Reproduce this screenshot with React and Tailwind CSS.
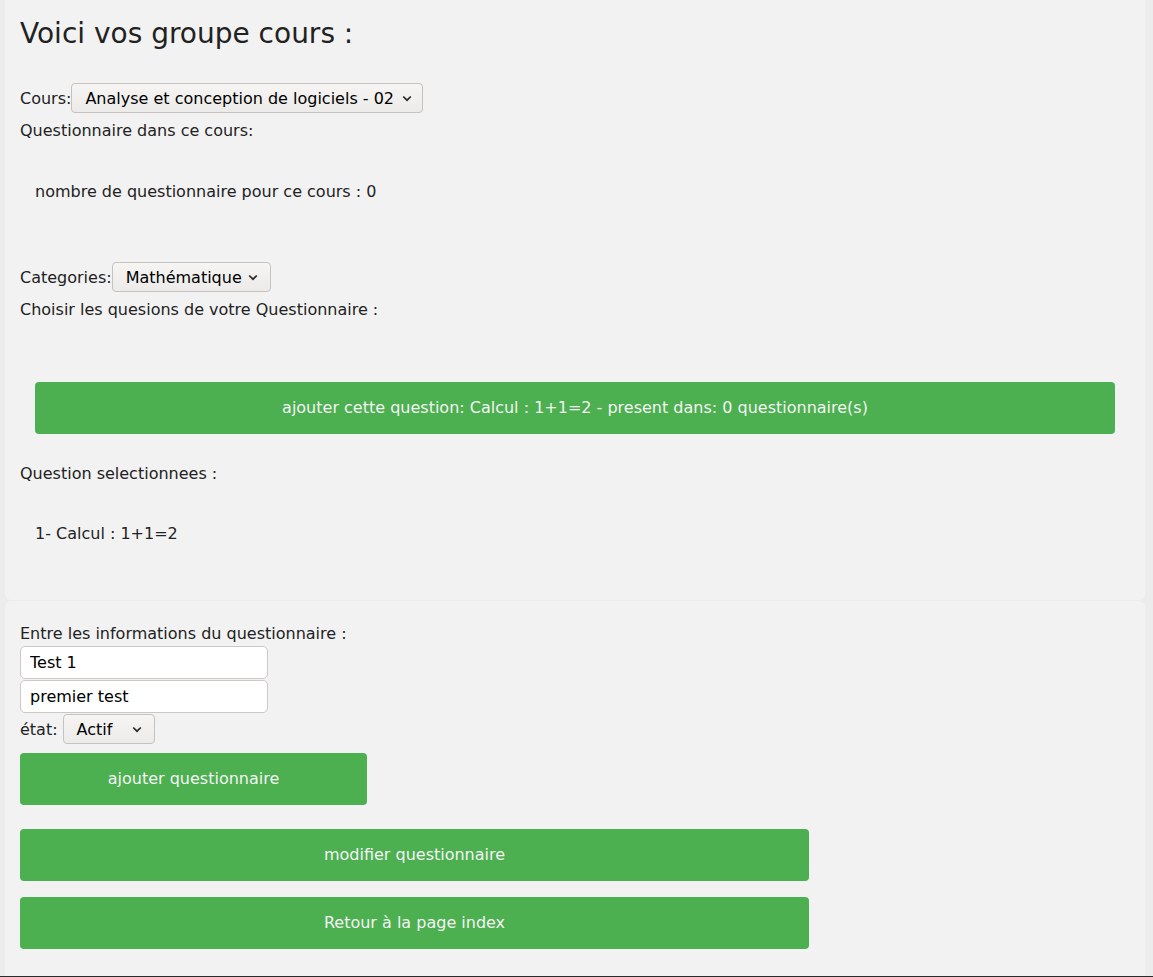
import React from 'react';

const Chevron = () => (
  <svg width="10" height="7" viewBox="0 0 10 7" className="shrink-0">
    <polyline points="1.2,1.5 5,5.2 8.8,1.5" fill="none" stroke="#2a2a2a" strokeWidth="1.7" />
  </svg>
);

function FakeSelect({ value, width, padRight = 'pr-[12px]' }) {
  return (
    <div
      className={`flex h-[30px] items-center justify-between rounded-[4px] border border-[#c5c2bf] bg-gradient-to-b from-[#f6f5f4] to-[#ecebe9] pl-[13px] ${padRight} text-black ${width}`}
    >
      <span>{value}</span>
      <Chevron />
    </div>
  );
}

function GreenButton({ children, className = '' }) {
  return (
    <button className={`flex h-[52px] items-center justify-center rounded-[4px] bg-[#4caf50] pb-[1px] text-[16px] text-[#f4f4f4] ${className}`}>
      {children}
    </button>
  );
}

export default function App() {
  return (
    <div className="flex min-h-[977px] flex-col border-b border-[#2b2b2b] bg-[#ececec] font-['DejaVu_Sans',sans-serif] text-[16px] leading-[19px] text-[#222]">
      {/* groupe cours */}
      <div className="ml-[5px] mr-[8px] rounded-b-[6px] bg-[#f2f2f2] px-[15px] pt-[17px] pb-[57px]">
        <h1 className="text-[28px] leading-[33px] font-normal">Voici vos groupe cours :</h1>

        <div className="mt-[33px] flex h-[30px] items-center">
          <span>Cours:</span>
          <FakeSelect value="Analyse et conception de logiciels - 02" width="w-[352px]" padRight="pr-[10px]" />
        </div>
        <p className="mt-[8px]">Questionnaire dans ce cours:</p>
        <p className="mt-[42px] pl-[15px]">nombre de questionnaire pour ce cours : 0</p>

        <div className="mt-[61px] flex h-[30px] items-center">
          <span>Categories:</span>
          <FakeSelect value="Mathématique" width="w-[159px]" padRight="pr-[12px]" />
        </div>
        <p className="mt-[8px]">Choisir les quesions de votre Questionnaire :</p>

        <div className="mt-[63px] px-[15px]">
          <GreenButton className="w-full">
            ajouter cette question: Calcul : 1+1=2 - present dans: 0 questionnaire(s)
          </GreenButton>
        </div>

        <p className="mt-[30px]">Question selectionnees :</p>
        <p className="mt-[41px] pl-[15px]">1- Calcul : 1+1=2</p>
      </div>

      {/* informations du questionnaire */}
      <div className="ml-[5px] mr-[8px] mt-[1px] flex-1 rounded-t-[6px] bg-[#f2f2f2] px-[15px] pt-[23px]">
        <p>Entre les informations du questionnaire :</p>
        <input
          defaultValue="Test 1"
          className="mt-[3px] block h-[33px] w-[248px] rounded-[5px] border border-[#ccc8c4] bg-white px-[9px] text-black outline-none"
        />
        <input
          defaultValue="premier test"
          className="mt-[1px] block h-[33px] w-[248px] rounded-[5px] border border-[#ccc8c4] bg-white px-[9px] text-black outline-none"
        />
        <div className="mt-[1px] flex h-[30px] items-center gap-[5px]">
          <span>état:</span>
          <FakeSelect value="Actif" width="w-[92px]" padRight="pr-[12px]" />
        </div>

        <GreenButton className="mt-[9px] w-[347px]">ajouter questionnaire</GreenButton>
        <GreenButton className="mt-[24px] w-[789px]">modifier questionnaire</GreenButton>
        <GreenButton className="mt-[16px] w-[789px]">Retour à la page index</GreenButton>
      </div>
    </div>
  );
}
